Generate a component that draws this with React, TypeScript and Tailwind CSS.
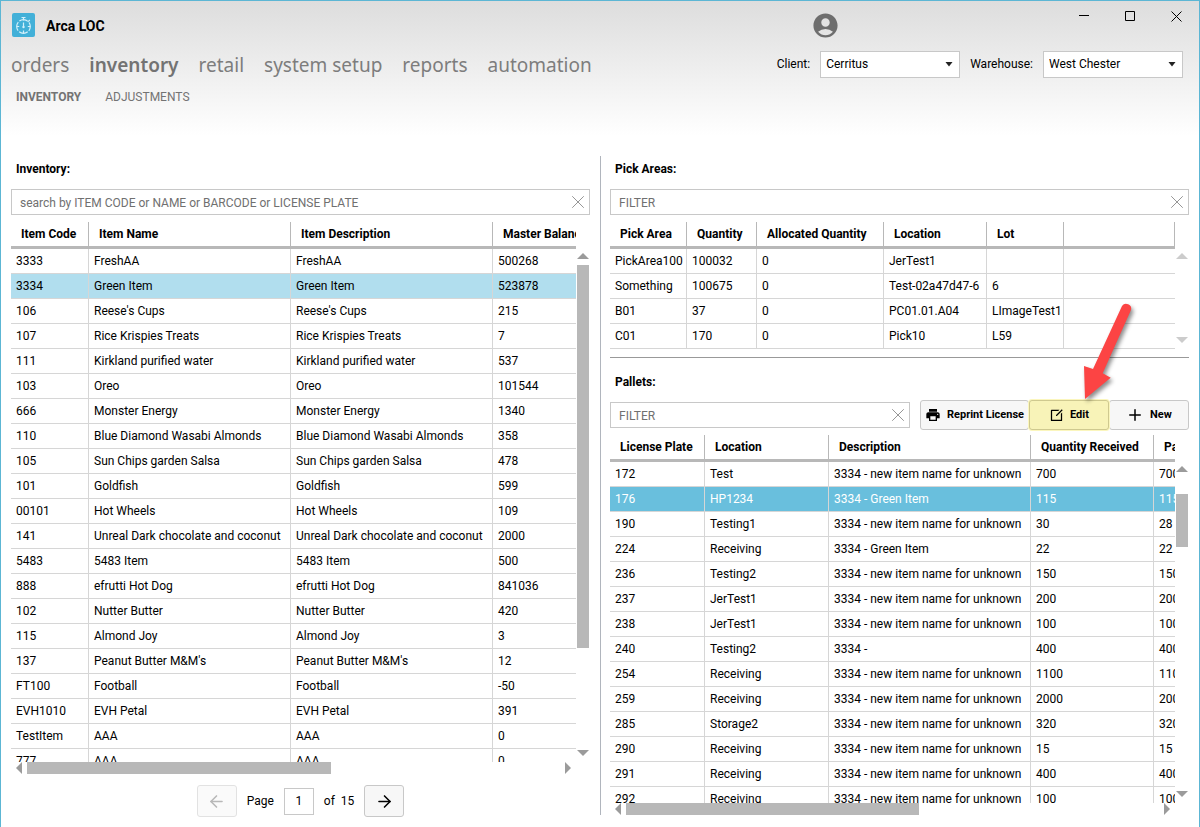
import React from 'react';
import { ArrowLeft, ArrowRight, Plus, X } from 'lucide-react';
import { MdAccountCircle, MdPrint } from 'react-icons/md';
import { RiEditBoxLine } from 'react-icons/ri';

interface Column {
  title: string;
  width: string;
}

interface GridProps {
  label: string;
  columns: Column[];
  rows: string[][];
  tableClass: string;
  selected?: number;
  selectedClass?: string;
}

const inventoryColumns: Column[] = [
  { title: 'Item Code', width: 'w-[78px]' },
  { title: 'Item Name', width: 'w-[202px]' },
  { title: 'Item Description', width: 'w-[202px]' },
  { title: 'Master Balance', width: '' },
];

const inventoryRows = [
  ['3333', 'FreshAA', 'FreshAA', '500268'],
  ['3334', 'Green Item', 'Green Item', '523878'],
  ['106', "Reese's Cups", "Reese's Cups", '215'],
  ['107', 'Rice Krispies Treats', 'Rice Krispies Treats', '7'],
  ['111', 'Kirkland purified water', 'Kirkland purified water', '537'],
  ['103', 'Oreo', 'Oreo', '101544'],
  ['666', 'Monster Energy', 'Monster Energy', '1340'],
  ['110', 'Blue Diamond Wasabi Almonds', 'Blue Diamond Wasabi Almonds', '358'],
  ['105', 'Sun Chips garden Salsa', 'Sun Chips garden Salsa', '478'],
  ['101', 'Goldfish', 'Goldfish', '599'],
  ['00101', 'Hot Wheels', 'Hot Wheels', '109'],
  ['141', 'Unreal Dark chocolate and coconut', 'Unreal Dark chocolate and coconut', '2000'],
  ['5483', '5483 Item', '5483 Item', '500'],
  ['888', 'efrutti Hot Dog', 'efrutti Hot Dog', '841036'],
  ['102', 'Nutter Butter', 'Nutter Butter', '420'],
  ['115', 'Almond Joy', 'Almond Joy', '3'],
  ['137', "Peanut Butter M&M's", "Peanut Butter M&M's", '12'],
  ['FT100', 'Football', 'Football', '-50'],
  ['EVH1010', 'EVH Petal', 'EVH Petal', '391'],
  ['TestItem', 'AAA', 'AAA', '0'],
  ['777', 'AAA', 'AAA', '0'],
];

const pickColumns: Column[] = [
  { title: 'Pick Area', width: 'w-[77px]' },
  { title: 'Quantity', width: 'w-[70px]' },
  { title: 'Allocated Quantity', width: 'w-[127px]' },
  { title: 'Location', width: 'w-[103px]' },
  { title: 'Lot', width: 'w-[77px]' },
  { title: '', width: '' },
];

const pickRows = [
  ['PickArea100', '100032', '0', 'JerTest1', '', ''],
  ['Something', '100675', '0', 'Test-02a47d47-6', '6', ''],
  ['B01', '37', '0', 'PC01.01.A04', 'LImageTest1', ''],
  ['C01', '170', '0', 'Pick10', 'L59', ''],
];

const palletColumns: Column[] = [
  { title: 'License Plate', width: 'w-[95px]' },
  { title: 'Location', width: 'w-[124px]' },
  { title: 'Description', width: 'w-[202px]' },
  { title: 'Quantity Received', width: 'w-[123px]' },
  { title: 'Pallet Quantity', width: '' },
];

const unknownItem = '3334 - new item name for unknown';

const palletRows = [
  ['172', 'Test', unknownItem, '700', '700'],
  ['176', 'HP1234', '3334 - Green Item', '115', '115'],
  ['190', 'Testing1', unknownItem, '30', '28'],
  ['224', 'Receiving', '3334 - Green Item', '22', '22'],
  ['236', 'Testing2', unknownItem, '150', '150'],
  ['237', 'JerTest1', unknownItem, '200', '200'],
  ['238', 'JerTest1', unknownItem, '100', '100'],
  ['240', 'Testing2', '3334 -', '400', '400'],
  ['254', 'Receiving', unknownItem, '1100', '1100'],
  ['259', 'Receiving', unknownItem, '2000', '2000'],
  ['285', 'Storage2', unknownItem, '320', '320'],
  ['290', 'Receiving', unknownItem, '15', '15'],
  ['291', 'Receiving', unknownItem, '400', '400'],
  ['292', 'Receiving', unknownItem, '100', '100'],
];

function Logo() {
  return (
    <svg width="24" height="24" viewBox="0 0 24 24" fill="none" stroke="#d3f0fa" strokeWidth="1.2">
      <rect width="23" height="24" rx="2" fill="#42b0d8" stroke="none" />
      <circle cx="11.5" cy="13.5" r="6.800" strokeDasharray="9.2 1.48" strokeDashoffset="4.6" />
      <path d="M9.5 4.5h4M11.5 4.500v3M16.200 8.600l1.600-1.600M11.500 17.500v2.500M4.800 13.500h2.400M15.800 13.500h2.400" />
      <path d="M11.5 9.5v4" />
      <circle cx="11.5" cy="14" r="1.2" fill="#d3f0fa" stroke="none" />
    </svg>
  );
}

function Triangle({ direction, light }: { direction: 'up' | 'down' | 'left' | 'right'; light?: boolean }) {
  const paths = {
    up: 'M0 9L6 3L12 9Z',
    down: 'M0 3L6 9L12 3Z',
    left: 'M9 0L3 6L9 12Z',
    right: 'M3 0L9 6L3 12Z',
  };

  return (
    <svg width="12" height="12" viewBox="0 0 12 12" className="shrink-0">
      <path d={paths[direction]} fill={light ? '#cccccc' : '#9b9b9b'} />
    </svg>
  );
}

// Vertical bar beside a grid, starts just under the header row
function VerticalBar({ light, children }: { light?: boolean; children?: React.ReactNode }) {
  return (
    <div className="flex w-[14px] shrink-0 flex-col items-center pt-7 pb-[3px]">
      <Triangle direction="up" light={light} />
      <div className="min-h-0 flex-1">{children}</div>
      <Triangle direction="down" light={light} />
    </div>
  );
}

function HorizontalBar({ children }: { children: React.ReactNode }) {
  return (
    <div className="mr-[14px] flex h-3 shrink-0 items-center gap-[2px] px-[2px]">
      <Triangle direction="left" />
      <div className="flex-1">{children}</div>
      <Triangle direction="right" />
    </div>
  );
}

function Grid({ label, columns, rows, tableClass, selected, selectedClass }: GridProps) {
  return (
    <div className="min-w-0 flex-1 overflow-hidden">
      <table aria-label={label} className={`min-w-full table-fixed border-separate border-spacing-0 text-left text-xs ${tableClass}`}>
        <thead>
          <tr>
            {columns.map((column, i) => (
              <th
                key={i}
                className={`h-[27px] overflow-hidden border-r border-b-3 border-[#b8b8b8] p-0 pl-[10px] font-bold whitespace-nowrap ${column.width}`}
              >
                {column.title}
              </th>
            ))}
          </tr>
        </thead>
        <tbody>
          {rows.map((row, i) => (
            <tr key={i} className={i === selected ? selectedClass : ''}>
              {row.map((cell, j) => (
                <td
                  key={j}
                  className="h-[25px] border-r border-b border-[#d6d6d6] p-0 pl-[5px] whitespace-nowrap last:border-r-0"
                >
                  {cell}
                </td>
              ))}
            </tr>
          ))}
        </tbody>
      </table>
    </div>
  );
}

function SearchBox({ label, placeholder }: { label: string; placeholder: string }) {
  return (
    <div className="flex h-[26px] min-w-0 flex-1 items-center border border-[#c8c8c8] bg-white">
      <input
        type="text"
        aria-label={label}
        placeholder={placeholder}
        className="h-full min-w-0 flex-1 pt-px pl-2 text-xs outline-none placeholder:text-[#707070]"
      />
      <button type="button" aria-label="Clear" className="shrink-0 text-[#8c8c8c]">
        <X size={22} strokeWidth={1} />
      </button>
    </div>
  );
}

function Picker({ id, label, value }: { id: string; label: string; value: string }) {
  return (
    <div className="flex items-center gap-[10px]">
      <label htmlFor={id}>{label}</label>
      <div className="relative">
        <select id={id} className="h-[27px] w-[140px] appearance-none border border-[#c8c8c8] bg-white pl-[5px] text-xs outline-none">
          <option>{value}</option>
        </select>
        <svg width="8" height="5" viewBox="0 0 8 5" className="pointer-events-none absolute top-[11px] right-[7px]">
          <path d="M0.500 0H7.500L4 4.500Z" fill="#222222" />
        </svg>
      </div>
    </div>
  );
}

function Header() {
  const menu = ['orders', 'inventory', 'retail', 'system setup', 'reports', 'automation'];

  return (
    <header className="h-[155px] shrink-0">
      {/* Title bar */}
      <div className="flex h-12 items-center pl-[11px]">
        <Logo />
        <h1 className="ml-[10px] flex-1 pt-px text-sm font-bold">Arca LOC</h1>
        <button type="button" aria-label="Account" className="mr-[221px] text-[#6e6e6e]">
          <MdAccountCircle size={29} />
        </button>
        <div className="flex h-[30px] self-start text-black">
          <button type="button" aria-label="Minimize" className="flex w-[46px] items-center justify-center">
            <svg width="10" height="10"><path d="M0 4.5H10" stroke="currentColor" /></svg>
          </button>
          <button type="button" aria-label="Maximize" className="flex w-[46px] items-center justify-center">
            <svg width="10" height="10"><path d="M.5 .5H9.5V9.5H.5Z" stroke="currentColor" fill="none" /></svg>
          </button>
          <button type="button" aria-label="Close" className="flex w-[46px] items-center justify-center">
            <svg width="11" height="11"><path d="M.5 .5L10.5 10.5M10.5 .5L.5 10.5" stroke="currentColor" /></svg>
          </button>
        </div>
      </div>

      {/* Main menu and pickers */}
      <div className="flex h-[30px] items-center justify-between pr-4 pl-[10px]">
        <nav className="flex gap-5 pt-[3px] font-['Noto_Sans',sans-serif] text-[19px] text-[#7d7d7d]">
          {menu.map((item) => (
            <a key={item} href="#" className={item === 'inventory' ? 'font-semibold text-[#737373]' : ''}>{item}</a>
          ))}
        </nav>
        <div className="flex gap-[10px]">
          <Picker id="client" label="Client:" value="Cerritus" />
          <Picker id="warehouse" label="Warehouse:" value="West Chester" />
        </div>
      </div>

      <nav className="flex h-9 items-center gap-6 pl-[15px] text-[#737373]">
        <a href="#" className="font-bold">INVENTORY</a>
        <a href="#">ADJUSTMENTS</a>
      </nav>
    </header>
  );
}

// Red callout arrow pointing at the edit button
function Callout() {
  return (
    <svg
      width="60"
      height="110"
      viewBox="0 0 60 110"
      className="pointer-events-none absolute right-[-31px] bottom-[18px] drop-shadow-[2px_3px_2px_rgba(0,0,0,0.45)]"
    >
      <path d="M42 4A5 5 0 0 1 51 8L22.700 71.300L30.700 75.700L5 97L4 64L13 67Z" fill="#fc4444" />
    </svg>
  );
}

const buttonClass = 'flex h-[30px] items-center justify-center gap-[6px] rounded-[3px] border text-[11px] font-bold';

export default function App() {
  return (
    <div className="flex h-screen flex-col overflow-hidden border-x border-t border-[#5cb6d4] bg-white bg-linear-to-b from-[#dddddd] to-white to-[135px] font-[Roboto,sans-serif] text-xs text-black">
      <Header />

      <main className="grid min-h-0 flex-1 grid-cols-2">
        {/* Inventory */}
        <section className="flex min-h-0 min-w-0 flex-col px-[10px] pb-[10px]">
          <h2 className="h-6 shrink-0 pl-[5px] leading-[26px] font-bold">Inventory:</h2>
          <div className="mt-[9px] flex shrink-0">
            <SearchBox label="Search inventory" placeholder="search by ITEM CODE or NAME or BARCODE or LICENSE PLATE" />
          </div>
          <div className="mt-[7px] flex min-h-0 flex-1">
            <Grid
              label="Inventory"
              columns={inventoryColumns}
              rows={inventoryRows}
              tableClass="w-[602px]"
              selected={1}
              selectedClass="bg-[#b1deee]"
            />
            <VerticalBar>
              <div className="mt-[3px] h-[79%] w-3 bg-[#b8b8b8]" />
            </VerticalBar>
          </div>
          <HorizontalBar>
            <div className="h-3 w-[57%] bg-[#b8b8b8]" />
          </HorizontalBar>
          <div className="mt-[11px] flex shrink-0 items-center justify-center gap-[10px]">
            <button type="button" disabled aria-label="Previous page" className="flex h-8 w-10 items-center justify-center rounded-[3px] border border-[#e2e2e2] bg-[#fafafa] text-[#b8b8b8]">
              <ArrowLeft size={19} />
            </button>
            <label htmlFor="page">Page</label>
            <input id="page" type="text" defaultValue="1" className="h-[27px] w-[30px] border border-[#c8c8c8] text-center outline-none" />
            <span>of&nbsp; 15</span>
            <button type="button" aria-label="Next page" className="flex h-8 w-10 items-center justify-center rounded-[3px] border border-[#c8c8c8] bg-[#f7f7f7]">
              <ArrowRight size={19} />
            </button>
          </div>
        </section>

        <section className="mb-3 flex min-h-0 min-w-0 flex-col border-l border-[#b0b5bd] pr-[10px] pl-[9px]">
          {/* Pick areas */}
          <h2 className="h-6 shrink-0 pl-[5px] leading-[26px] font-bold">Pick Areas:</h2>
          <div className="mt-[9px] flex shrink-0">
            <SearchBox label="Filter pick areas" placeholder="FILTER" />
          </div>
          <div className="mt-[7px] flex shrink-0">
            <Grid label="Pick areas" columns={pickColumns} rows={pickRows} tableClass="w-full" />
            <VerticalBar light />
          </div>

          {/* Pallets */}
          <div className="mt-2 shrink-0 border-t border-[#999999] pt-[11px]">
            <h2 className="h-6 pl-[5px] leading-[26px] font-bold">Pallets:</h2>
          </div>
          <div className="mt-[7px] flex shrink-0 items-center">
            <SearchBox label="Filter pallets" placeholder="FILTER" />
            <div className="ml-[10px] flex shrink-0">
              <button type="button" className={`${buttonClass} w-[109px] border-[#c8c8c8] bg-[#f7f7f7]`}>
                <MdPrint size={16} />
                Reprint License
              </button>
              <div className="relative">
                <button type="button" className={`${buttonClass} w-20 border-[#cfc98f] bg-[#f8f3b8] ring-1 ring-[#fbf6bd]`}>
                  <RiEditBoxLine size={15} />
                  Edit
                </button>
                <Callout />
              </div>
              <button type="button" className={`${buttonClass} w-20 border-[#c8c8c8] bg-[#f7f7f7]`}>
                <Plus size={18} />
                New
              </button>
            </div>
          </div>
          <div className="mt-[5px] flex min-h-0 flex-1">
            <Grid
              label="Pallets"
              columns={palletColumns}
              rows={palletRows}
              tableClass="w-[650px]"
              selected={1}
              selectedClass="bg-[#69bfdd] text-white"
            />
            <VerticalBar>
              <div className="mt-[19px] h-[53px] w-3 bg-[#b8b8b8]" />
            </VerticalBar>
          </div>
          <HorizontalBar>
            <div className="h-3 w-[55%] bg-[#b8b8b8]" />
          </HorizontalBar>
        </section>
      </main>
    </div>
  );
}
